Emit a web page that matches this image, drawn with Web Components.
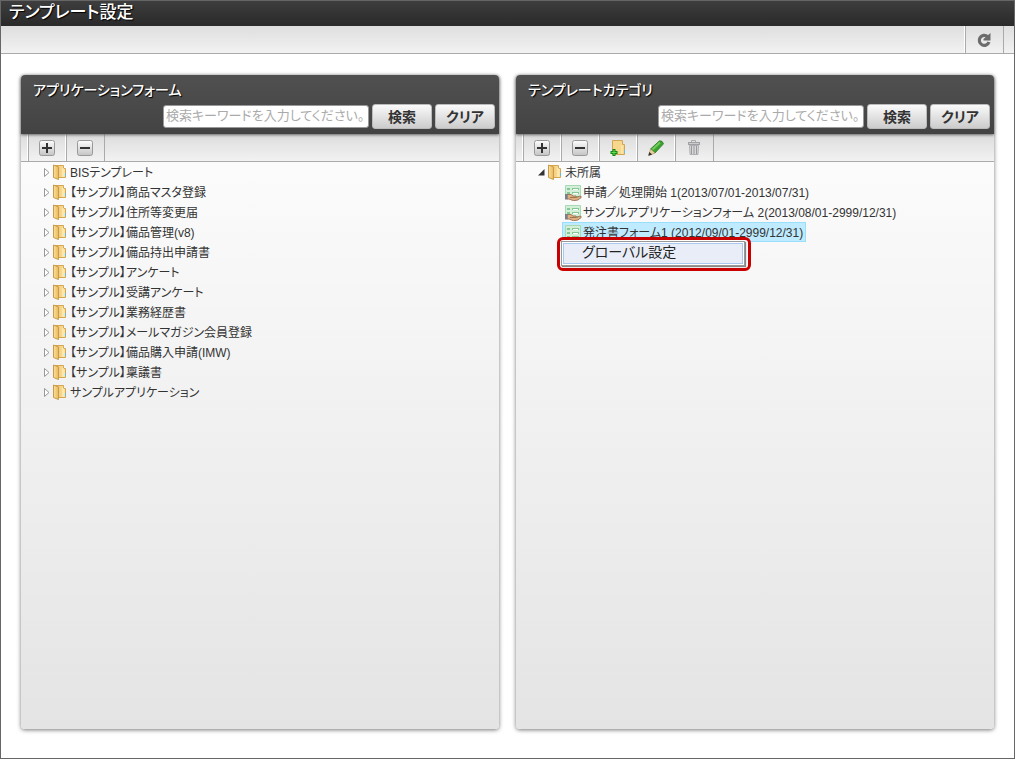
<!DOCTYPE html>
<html lang="ja">
<head>
<meta charset="utf-8">
<title>テンプレート設定</title>
<style>
  body {
    margin: 0;
    font-family: "Liberation Sans", "Noto Sans CJK JP", sans-serif;
    font-size: 12px;
    font-feature-settings: "palt";
    color: #333;
  }
</style>
</head>
<body>
<template-page>
  <span slot="title">テンプレート設定</span>
  <tool-button slot="tools" icon="refresh" label="更新"></tool-button>
  <tree-panel heading="アプリケーションフォーム">
    <tool-button slot="tools" icon="plus" label="すべて開く"></tool-button>
    <tool-button slot="tools" icon="minus" label="すべて閉じる"></tool-button>
    <tree-item>BISテンプレート</tree-item>
    <tree-item>【サンプル】商品マスタ登録</tree-item>
    <tree-item>【サンプル】住所等変更届</tree-item>
    <tree-item>【サンプル】備品管理(v8)</tree-item>
    <tree-item>【サンプル】備品持出申請書</tree-item>
    <tree-item>【サンプル】アンケート</tree-item>
    <tree-item>【サンプル】受講アンケート</tree-item>
    <tree-item>【サンプル】業務経歴書</tree-item>
    <tree-item>【サンプル】メールマガジン会員登録</tree-item>
    <tree-item>【サンプル】備品購入申請(IMW)</tree-item>
    <tree-item>【サンプル】稟議書</tree-item>
    <tree-item>サンプルアプリケーション</tree-item>
  </tree-panel>
  <tree-panel heading="テンプレートカテゴリ">
    <tool-button slot="tools" icon="plus" label="すべて開く"></tool-button>
    <tool-button slot="tools" icon="minus" label="すべて閉じる"></tool-button>
    <tool-button slot="tools" icon="add" label="カテゴリ新規作成"></tool-button>
    <tool-button slot="tools" icon="edit" label="編集"></tool-button>
    <tool-button slot="tools" icon="trash" label="削除"></tool-button>
    <tree-item open>未所属
      <tree-item slot="children" type="shared">申請／処理開始 1(2013/07/01-2013/07/31)</tree-item>
      <tree-item slot="children" type="shared">サンプルアプリケーションフォーム 2(2013/08/01-2999/12/31)</tree-item>
      <tree-item slot="children" type="form" selected>発注書フォーム1 (2012/09/01-2999/12/31)
        <context-menu slot="menu">グローバル設定</context-menu>
      </tree-item>
    </tree-item>
  </tree-panel>
</template-page>

<script>
const sheet = `
  <path d="M.5 1.500h15v13H.5z" fill="#d3efd8" stroke="#a9d8b4"/>
  <path d="M2 4h3v2H2zM7 4h7v2H7zM2 8h3v2H2zM7 8h7v2H7zM2 12h3v1H2zM7 12h7v1H7z" fill="#83c795"/>
  <path d="M8 5h5v1H8zM8 9h5v1H8z" fill="#fff"/>`;

const ICONS = {
  folder: `<svg width="14" height="16" viewBox="0 0 14 16">
    <defs>
      <linearGradient id="back"><stop stop-color="#e9bd63"/><stop offset="1" stop-color="#ffe6a6"/></linearGradient>
      <linearGradient id="front"><stop stop-color="#fbe0a0"/><stop offset="1" stop-color="#eab959"/></linearGradient>
    </defs>
    <path d="M1.500 1.500h9v3h2v9h-11z" fill="url(#back)" stroke="#d3a654"/>
    <path d="M.5 1l5 2v12.500L.5 13.500z" fill="url(#front)" stroke="#c99a49"/>
    <path d="M10 4v9" stroke="#fff0c4"/>
    <path d="M12.500 9v3" stroke="#5dbbe8"/></svg>`,
  form: `<svg width="17" height="17" viewBox="0 0 17 17">${sheet}</svg>`,
  shared: `<svg width="17" height="17" viewBox="0 0 17 17">${sheet}
    <path d="M2 10.500h4l2 1.500h3l.5 1.500 3.500-1.500 1.500 1-3.500 3-4.500.7L4 15H2z" fill="#dfb083" stroke="#8f6444" stroke-width=".8"/>
    <path d="M5 13.500h6" stroke="#8f6444" stroke-width=".8"/>
    <path d="M0 10h2.500v5.500H0z" fill="#76808e"/></svg>`,
  plus: `<svg width="16" height="16" viewBox="0 0 16 16">
    <rect x=".5" y=".5" width="15" height="15" rx="2" fill="url(#g)" stroke="#999"/>
    <path d="M8 3v10M3 8h10" stroke="#333" stroke-width="2"/></svg>`,
  minus: `<svg width="16" height="16" viewBox="0 0 16 16">
    <rect x=".5" y=".5" width="15" height="15" rx="2" fill="url(#g)" stroke="#999"/>
    <path d="M3 8h10" stroke="#333" stroke-width="2"/></svg>`,
  add: `<svg width="16" height="16" viewBox="0 0 16 16">
    <path d="M2.500.5h10v4h2v10h-12z" fill="#f6d78c" stroke="#d0a656"/>
    <path d="M12 5v9" stroke="#fff0c0"/>
    <path d="M14.500 10v3" stroke="#5bc0ee"/>
    <path d="M4 9v7M.5 12.500h7" stroke="#16851a" stroke-width="3"/>
    <path d="M4 10v5M1.500 12.500h5" stroke="#5fe04f"/></svg>`,
  edit: `<svg width="16" height="16" viewBox="0 0 16 16">
    <path d="M11.500.8q3-.3 4 3L7 13 2.500 9z" fill="#38a22d" stroke="#287a22" stroke-width=".8"/>
    <path d="M12 2.500L4.500 9.500" stroke="#74c95c" stroke-width="2"/>
    <path d="M2.500 9L7 13 .8 15.500z" fill="#efd29c" stroke="#a48a5c" stroke-width=".6"/>
    <path d="M.3 15.800l1-3.800 3 2.500z" fill="#333"/></svg>`,
  trash: `<svg width="16" height="16" viewBox="0 0 16 16">
    <path d="M5.500 2V.5h4V2" fill="none" stroke="#aaa"/>
    <rect x="2.500" y="2.500" width="11" height="2" fill="#ccc" stroke="#a0a0a4"/>
    <path d="M3.500 5.500h9l-.5 9H4z" fill="#d8d8d8" stroke="#b0b0b4"/>
    <path d="M5.500 6v8M8 6v8M10.500 6v8" stroke="#98989c"/></svg>`,
  refresh: `<svg width="16" height="16" viewBox="0 0 16 16">
    <path d="M11.500 4.500A5 5 0 1 0 13 10" fill="none" stroke="#6c6c6c" stroke-width="3.200"/>
    <path d="M14.500 1v7.500H7.500V7z" fill="#6c6c6c"/></svg>`
};

class TemplatePage extends HTMLElement {
  constructor() {
    super();
    const template = document.createElement("template");
    template.innerHTML = `
      <header><h1><slot name="title"></slot></h1></header>
      <div class="toolbar"><slot name="tools"></slot></div>
      <main><slot></slot></main>
      <style>
        :host {
          display: flex;
          flex-direction: column;
          box-sizing: border-box;
          min-height: 100vh;
          border: 1px solid #666;
          background: #fff;
        }
        header {
          padding: 0 8px;
          background: linear-gradient(#3e3e3e, #292929);
        }
        h1 {
          margin: 0;
          font-size: 17px;
          font-weight: 500;
          line-height: 24px;
          padding-bottom: 1px;
          color: #fff;
          text-shadow: 1px 1px 1px #000;
        }
        .toolbar {
          display: flex;
          justify-content: flex-end;
          height: 27px;
          padding-right: 10px;
          border-bottom: 1px solid #aaa;
          background: linear-gradient(#dedede, #f2f2f2);
        }
        main {
          display: flex;
          flex: 1;
          gap: 17px;
          padding: 21px 20px 29px;
        }
      </style>
    `;
    this.attachShadow({ mode: "open" }).appendChild(template.content.cloneNode(true));
  }
}

class ToolButton extends HTMLElement {
  connectedCallback() {
    const template = document.createElement("template");
    template.innerHTML = `
      <button type="button" aria-label="${this.getAttribute("label")}">${ICONS[this.getAttribute("icon")]}</button>
      <svg width="0" height="0" class="defs"><linearGradient id="g" x2="0" y2="1"><stop stop-color="#fdfdfd"/><stop offset="1" stop-color="#c4c4c4"/></linearGradient></svg>
      <style>
        :host {
          display: flex;
          width: 37px;
          border-left: 1px solid #aaa;
          box-shadow: -1px 0 #fff;
        }
        :host(:last-of-type) {
          border-right: 1px solid #aaa;
        }
        button {
          display: flex;
          flex: 1;
          align-items: center;
          justify-content: center;
          padding: 0 2px 0 0;
          border: 0;
          background: none;
          cursor: pointer;
        }
        .defs {
          position: absolute;
        }
      </style>
    `;
    this.attachShadow({ mode: "open" }).appendChild(template.content.cloneNode(true));
  }
}

class TreePanel extends HTMLElement {
  connectedCallback() {
    const template = document.createElement("template");
    template.innerHTML = `
      <div class="head">
        <h2>${this.getAttribute("heading")}</h2>
        <form>
          <input type="text" aria-label="検索キーワード" placeholder="検索キーワードを入力してください。">
          <button type="submit">検索</button>
          <button type="reset">クリア</button>
        </form>
      </div>
      <div class="toolbar"><slot name="tools"></slot></div>
      <div class="tree" role="tree"><slot></slot></div>
      <style>
        :host {
          display: flex;
          flex: 1;
          flex-direction: column;
          border-radius: 4px;
          background: linear-gradient(#fff, #e4e4e4);
          box-shadow: 0 1px 4px #777;
        }
        .head {
          padding: 5px 4px 5px 12px;
          border-radius: 4px 4px 0 0;
          background: linear-gradient(#505050, #434343);
          box-shadow: 0 1px 3px #666;
          z-index: 1;
        }
        h2 {
          margin: 0;
          font-size: 14px;
          font-weight: 500;
          line-height: 20px;
          color: #fff;
          text-shadow: 1px 1px 1px #000;
        }
        form {
          display: flex;
          align-items: center;
          justify-content: flex-end;
          gap: 3px;
          margin-top: 4px;
        }
        input {
          box-sizing: border-box;
          width: 206px;
          height: 23px;
          padding: 0 2px 2px;
          border: 1px solid #999;
          border-radius: 3px;
          background: #fff;
          font: 13px "Liberation Sans", "Noto Sans CJK JP", sans-serif;
          font-feature-settings: inherit;
          color: #333;
        }
        input::placeholder {
          color: #aaa;
        }
        button {
          width: 60px;
          height: 25px;
          padding: 0 0 2px;
          border: 1px solid #bbb;
          border-radius: 3px;
          background: linear-gradient(#fafafa, #ccc);
          font: bold 14px "Liberation Sans", "Noto Sans CJK JP", sans-serif;
          font-feature-settings: inherit;
          color: #333;
        }
        .toolbar {
          display: flex;
          height: 27px;
          padding-left: 7px;
          border-bottom: 1px solid #aaa;
          background: linear-gradient(#dcdcdc, #f2f2f2);
        }
        .tree {
          padding-left: 19px;
        }
      </style>
    `;
    this.attachShadow({ mode: "open" }).appendChild(template.content.cloneNode(true));
    this.shadowRoot.querySelector("form").addEventListener("submit", (event) => event.preventDefault());
  }
}

class TreeItem extends HTMLElement {
  connectedCallback() {
    const type = this.getAttribute("type") || "folder";
    const open = this.hasAttribute("open");
    const arrow = open
      ? `<path d="M6.500 1v6.500H0z" fill="#333"/>`
      : `<path d="M1.500 .5v8l4.500-4z" fill="#fff" stroke="#999"/>`;
    const template = document.createElement("template");
    template.innerHTML = `
      <div class="row ${type}">
        ${type === "folder" ? `<svg width="7" height="9" viewBox="0 0 7 9">${arrow}</svg>` : ""}
        ${ICONS[type]}
        <span><slot></slot></span>
        <slot name="menu"></slot>
      </div>
      <div class="children" role="group"><slot name="children"></slot></div>
      <style>
        :host {
          display: block;
        }
        .row {
          display: flex;
          align-items: center;
          box-sizing: border-box;
          position: relative;
          width: fit-content;
          height: 20px;
          padding: 0 2px;
          border: 1px solid transparent;
          gap: 3px;
          white-space: nowrap;
        }
        .form, .shared {
          gap: 1px;
        }
        :host([selected]) .row {
          border-color: #99defd;
          background: #beebff;
        }
        span {
          padding-bottom: 2px;
        }
        .children {
          padding-left: 27px;
        }
        svg {
          flex: none;
        }
      </style>
    `;
    this.attachShadow({ mode: "open" }).appendChild(template.content.cloneNode(true));
    this.setAttribute("role", "treeitem");
  }
}

class ContextMenu extends HTMLElement {
  constructor() {
    super();
    const template = document.createElement("template");
    template.innerHTML = `
      <div class="menu"><button type="button"><slot></slot></button></div>
      <style>
        :host {
          position: absolute;
          top: 14px;
          left: -6px;
          z-index: 2;
          box-sizing: border-box;
          width: 194px;
          padding: 1px;
          border: 3px solid #c80000;
          border-radius: 6px;
          background: #fff;
        }
        .menu {
          margin: 0 2px 1px 0;
          padding: 1px;
          border: 1px solid #999;
          background: #fff;
          box-shadow: 1px 1px 1px #888;
        }
        button {
          display: block;
          width: 100%;
          height: 21px;
          padding: 0 0 2px 18px;
          border: 1px solid #a8c8f0;
          background: #e8edf7;
          font: 14px "Liberation Sans", "Noto Sans CJK JP", sans-serif;
          font-feature-settings: inherit;
          line-height: 17px;
          color: #222;
          text-align: left;
        }
      </style>
    `;
    this.attachShadow({ mode: "open" }).appendChild(template.content.cloneNode(true));
  }
}

customElements.define("template-page", TemplatePage);
customElements.define("tool-button", ToolButton);
customElements.define("tree-panel", TreePanel);
customElements.define("tree-item", TreeItem);
customElements.define("context-menu", ContextMenu);
</script>
</body>
</html>
